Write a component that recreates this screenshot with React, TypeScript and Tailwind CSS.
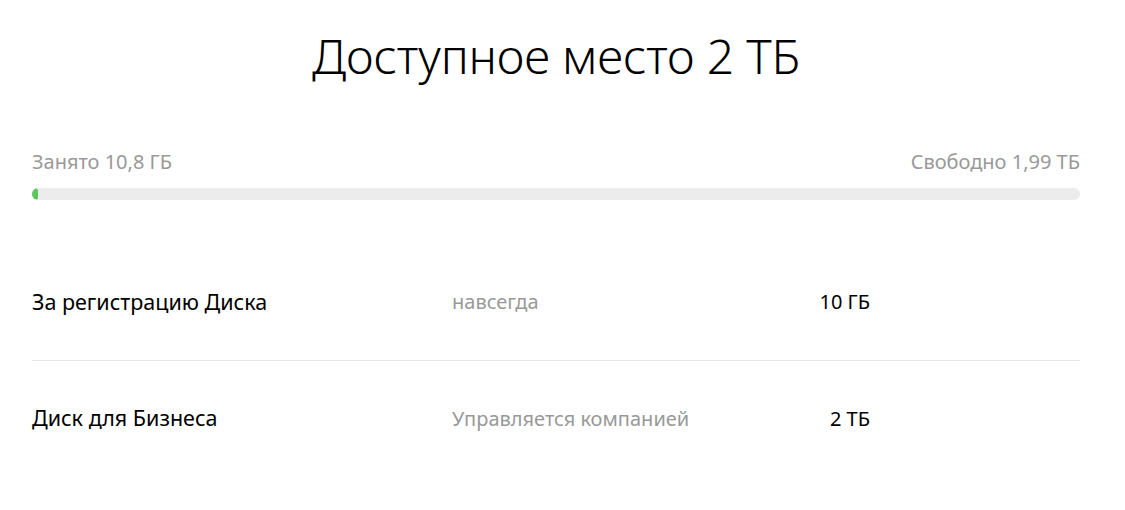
import React from 'react';

const rows = [
    { title: 'За регистрацию Диска', note: 'навсегда', size: '10 ГБ' },
    { title: 'Диск для Бизнеса', note: 'Управляется компанией', size: '2 ТБ' },
];

export default function App() {
    const usedPercent = 0.5;

    return (
        <div className="min-h-[510px] bg-white pl-8 pr-[45px] pt-[24px] font-['Noto_Sans',sans-serif] text-black">
            <h1 className="text-center text-[48px] font-light leading-[64px] tracking-[-0.2px]">
                Доступное место 2 ТБ
            </h1>

            <div className="mt-[62px]">
                <div className="flex items-center justify-between text-[20px] leading-6 text-[#999]">
                    <span>Занято 10,8 ГБ</span>
                    <span>Свободно 1,99 ТБ</span>
                </div>
                <div className="mt-[14px] h-3 w-full overflow-hidden rounded-full bg-[#ececec]">
                    <div
                        className="h-full min-w-[6px] rounded-full bg-[#5bc75b]"
                        style={{ width: `${usedPercent}%` }}
                    />
                </div>
            </div>

            <div className="mt-[44px]">
                {rows.map((row, i) => (
                    <div
                        key={row.title}
                        className={`flex h-[117px] items-center text-[20px] ${i === 0 ? 'border-b border-[#e6e6e6]' : 'pb-[2px]'}`}
                    >
                        <div className="w-[420px] text-[21.5px]">{row.title}</div>
                        <div className="w-[300px] text-[#999]">{row.note}</div>
                        <div className="w-[118px] text-right">{row.size}</div>
                    </div>
                ))}
            </div>
        </div>
    );
}
